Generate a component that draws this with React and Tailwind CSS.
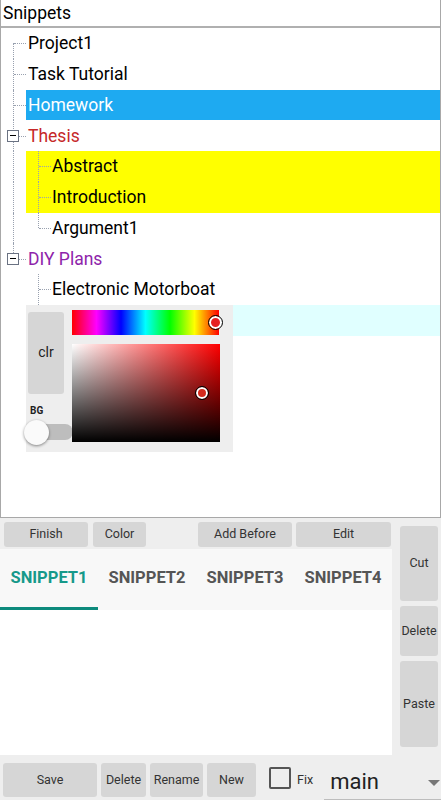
import React from "react";

const ROW = "h-[30.75px]";

function Gutter({ line = "none", kind = "dash" }) {
    // line: none | full | top | bottom ; kind: dash | box | blank
    return (
        <div className="relative w-[25px] shrink-0 self-stretch">
            {line === "full" && <span className="absolute left-[12px] top-0 bottom-0 border-l border-dotted border-gray-400" />}
            {line === "top" && <span className="absolute left-[12px] top-0 h-1/2 border-l border-dotted border-gray-400" />}
            {line === "bottom" && <span className="absolute left-[12px] top-1/2 bottom-0 border-l border-dotted border-gray-400" />}
            {kind === "dash" && <span className="absolute left-[13px] right-0 top-1/2 border-t border-dotted border-gray-400" />}
            {kind === "box" && (
                <>
                    <span className="absolute left-[6px] top-1/2 -translate-y-1/2 w-[12px] h-[12px] bg-white border border-gray-500 flex items-center justify-center">
                        <span className="w-[6px] border-t border-black" />
                    </span>
                    <span className="absolute left-[18px] right-0 top-1/2 border-t border-dotted border-gray-400" />
                </>
            )}
        </div>
    );
}

function Row({ line, kind = "dash", depth = 1, line2 = "full", bg = "", color = "text-black", children }) {
    return (
        <div className={`flex ${ROW}`}>
            <Gutter line={line} kind={kind} />
            <div className={`flex-1 flex items-center ${bg}`}>
                {depth === 2 && <Gutter line={line2} kind="dash" />}
                <span className={`${depth === 2 ? "pl-[1px]" : "pl-[2px]"} text-[17.5px] ${color}`}>{children}</span>
            </div>
        </div>
    );
}

function Btn({ className = "", children }) {
    return (
        <div className={`bg-[#d6d6d6] rounded-[3px] flex items-center justify-center text-[12.5px] text-[#333] ${className}`}>
            {children}
        </div>
    );
}

export default function App() {
    return (
        <div className="w-[441px] h-[800px] bg-[#eeeeee] flex flex-col overflow-hidden" style={{ fontFamily: "Roboto, 'Liberation Sans', sans-serif" }}>
            {/* TREE PANEL */}
            <div className="h-[518px] shrink-0 bg-white border-l border-r border-b border-[#a8a8a8] flex flex-col">
                <div className="h-[28px] border-b-2 border-[#b0b0b0] flex items-center pl-[2px] text-[17.5px] text-black">Snippets</div>
                <div className="flex flex-col">
                    <Row line="bottom">Project1</Row>
                    <Row line="full">Task Tutorial</Row>
                    <Row line="full" bg="bg-[#1eaaf1]" color="text-white">Homework</Row>
                    <Row line="full" kind="box" color="text-[#c62828]">Thesis</Row>
                    <Row line="full" kind="blank" depth={2} line2="full" bg="bg-[#ffff00]">Abstract</Row>
                    <Row line="full" kind="blank" depth={2} line2="full" bg="bg-[#ffff00]">Introduction</Row>
                    <Row line="full" kind="blank" depth={2} line2="top">Argument1</Row>
                    <Row line="top" kind="box" color="text-[#8e24aa]">DIY Plans</Row>
                    <Row line="none" kind="blank" depth={2} line2="full">Electronic Motorboat</Row>

                    {/* color picker row */}
                    <div className="flex">
                        <div className="w-[25px] shrink-0" />
                        <div className="flex-1 flex items-start">
                            <div className="w-[207px] h-[147px] bg-[#eeeeee] flex gap-[9px] pl-[2px] pt-[5px]">
                                <div className="w-[36px] flex flex-col">
                                    <div className="h-[82px] bg-[#d6d6d6] rounded-[3px] flex items-center justify-center text-[14px] text-[#222] mt-[2px]">clr</div>
                                    <div className="mt-[12px] pl-[2px] text-[10px] font-bold text-[#222] leading-none">BG</div>
                                    <div className="relative mt-[4px] h-[24px]">
                                        <div className="absolute left-[1px] top-[4px] w-[44px] h-[16px] rounded-full bg-[#bdbdbd]" />
                                        <div className="absolute -left-[4px] top-0 w-[25px] h-[25px] rounded-full bg-[#fafafa] shadow-[0_1px_3px_rgba(0,0,0,0.45)]" />
                                    </div>
                                </div>
                                <div className="flex flex-col gap-[9px] -ml-[1px]">
                                    <div className="relative w-[147px] h-[25px] bg-[linear-gradient(to_right,#ff0000,#ff00ff,#0000ff,#00ffff,#00ff00,#ffff00,#ff0000)]">
                                        <span className="absolute left-[137px] top-[6px] w-[13px] h-[13px] rounded-full bg-[#e62020] border-2 border-white outline outline-1 outline-black" />
                                    </div>
                                    <div className="relative w-[148px] h-[98px] bg-[linear-gradient(to_top,#000,transparent),linear-gradient(to_right,#fff,#ff0000)]">
                                        <span className="absolute left-[124px] top-[43px] w-[12px] h-[12px] rounded-full bg-[#d42a1e] border-2 border-white outline outline-1 outline-black" />
                                    </div>
                                </div>
                            </div>
                            <div className="flex-1 h-[31px] bg-[#e0ffff]" />
                        </div>
                    </div>
                </div>
            </div>

            {/* BOTTOM AREA */}
            <div className="flex h-[237px] shrink-0">
                <div className="w-[392px] flex flex-col">
                    <div className="h-[31px] flex items-start pt-[4px] pl-[4px]">
                        <Btn className="w-[84px] h-[25px]">Finish</Btn>
                        <Btn className="w-[53px] h-[25px] ml-[5px]">Color</Btn>
                        <Btn className="w-[94px] h-[25px] ml-[52px]">Add Before</Btn>
                        <Btn className="w-[95px] h-[25px] ml-[4px]">Edit</Btn>
                    </div>
                    <div className="h-[61px] bg-[#f8f8f8] flex">
                        {["SNIPPET1", "SNIPPET2", "SNIPPET3", "SNIPPET4"].map((t, i) => (
                            <div key={t} className="w-[98px] flex flex-col">
                                <div className={`flex-1 flex items-center justify-center text-[16.5px] font-bold ${i === 0 ? "text-[#16998a]" : "text-[#555555]"}`}>{t}</div>
                                <div className={`h-[3px] ${i === 0 ? "bg-[#0d8a7c]" : ""}`} />
                            </div>
                        ))}
                    </div>
                    <div className="flex-1 bg-white" />
                </div>
                <div className="flex-1 flex flex-col gap-[5px] pt-[8px] pl-[8px] pr-[3px]">
                    <Btn className="h-[75px]">Cut</Btn>
                    <Btn className="h-[50px]">Delete</Btn>
                    <Btn className="h-[86px]">Paste</Btn>
                </div>
            </div>

            <div className="flex-1 flex items-start pt-[8px] pl-[3px]">
                <Btn className="w-[94px] h-[34px]">Save</Btn>
                <Btn className="w-[45px] h-[34px] ml-[4px]">Delete</Btn>
                <Btn className="w-[53px] h-[34px] ml-[4px]">Rename</Btn>
                <Btn className="w-[49px] h-[34px] ml-[4px]">New</Btn>
                <div className="ml-[13px] mt-[4px] w-[22px] h-[22px] border-2 border-[#555] rounded-[2px]" />
                <span className="ml-[6px] mt-[8px] text-[12.5px] text-[#333]">Fix</span>
                <div className="ml-[11px] flex-1 h-[37px] border-b border-[#bdbdbd] flex items-center justify-between pl-[6px] pr-[1px]">
                    <span className="text-[22px] text-[#222]">main</span>
                    <span className="w-0 h-0 border-l-[6px] border-r-[6px] border-t-[6px] border-l-transparent border-r-transparent border-t-[#777] mt-[4px]" />
                </div>
            </div>
        </div>
    );
}
